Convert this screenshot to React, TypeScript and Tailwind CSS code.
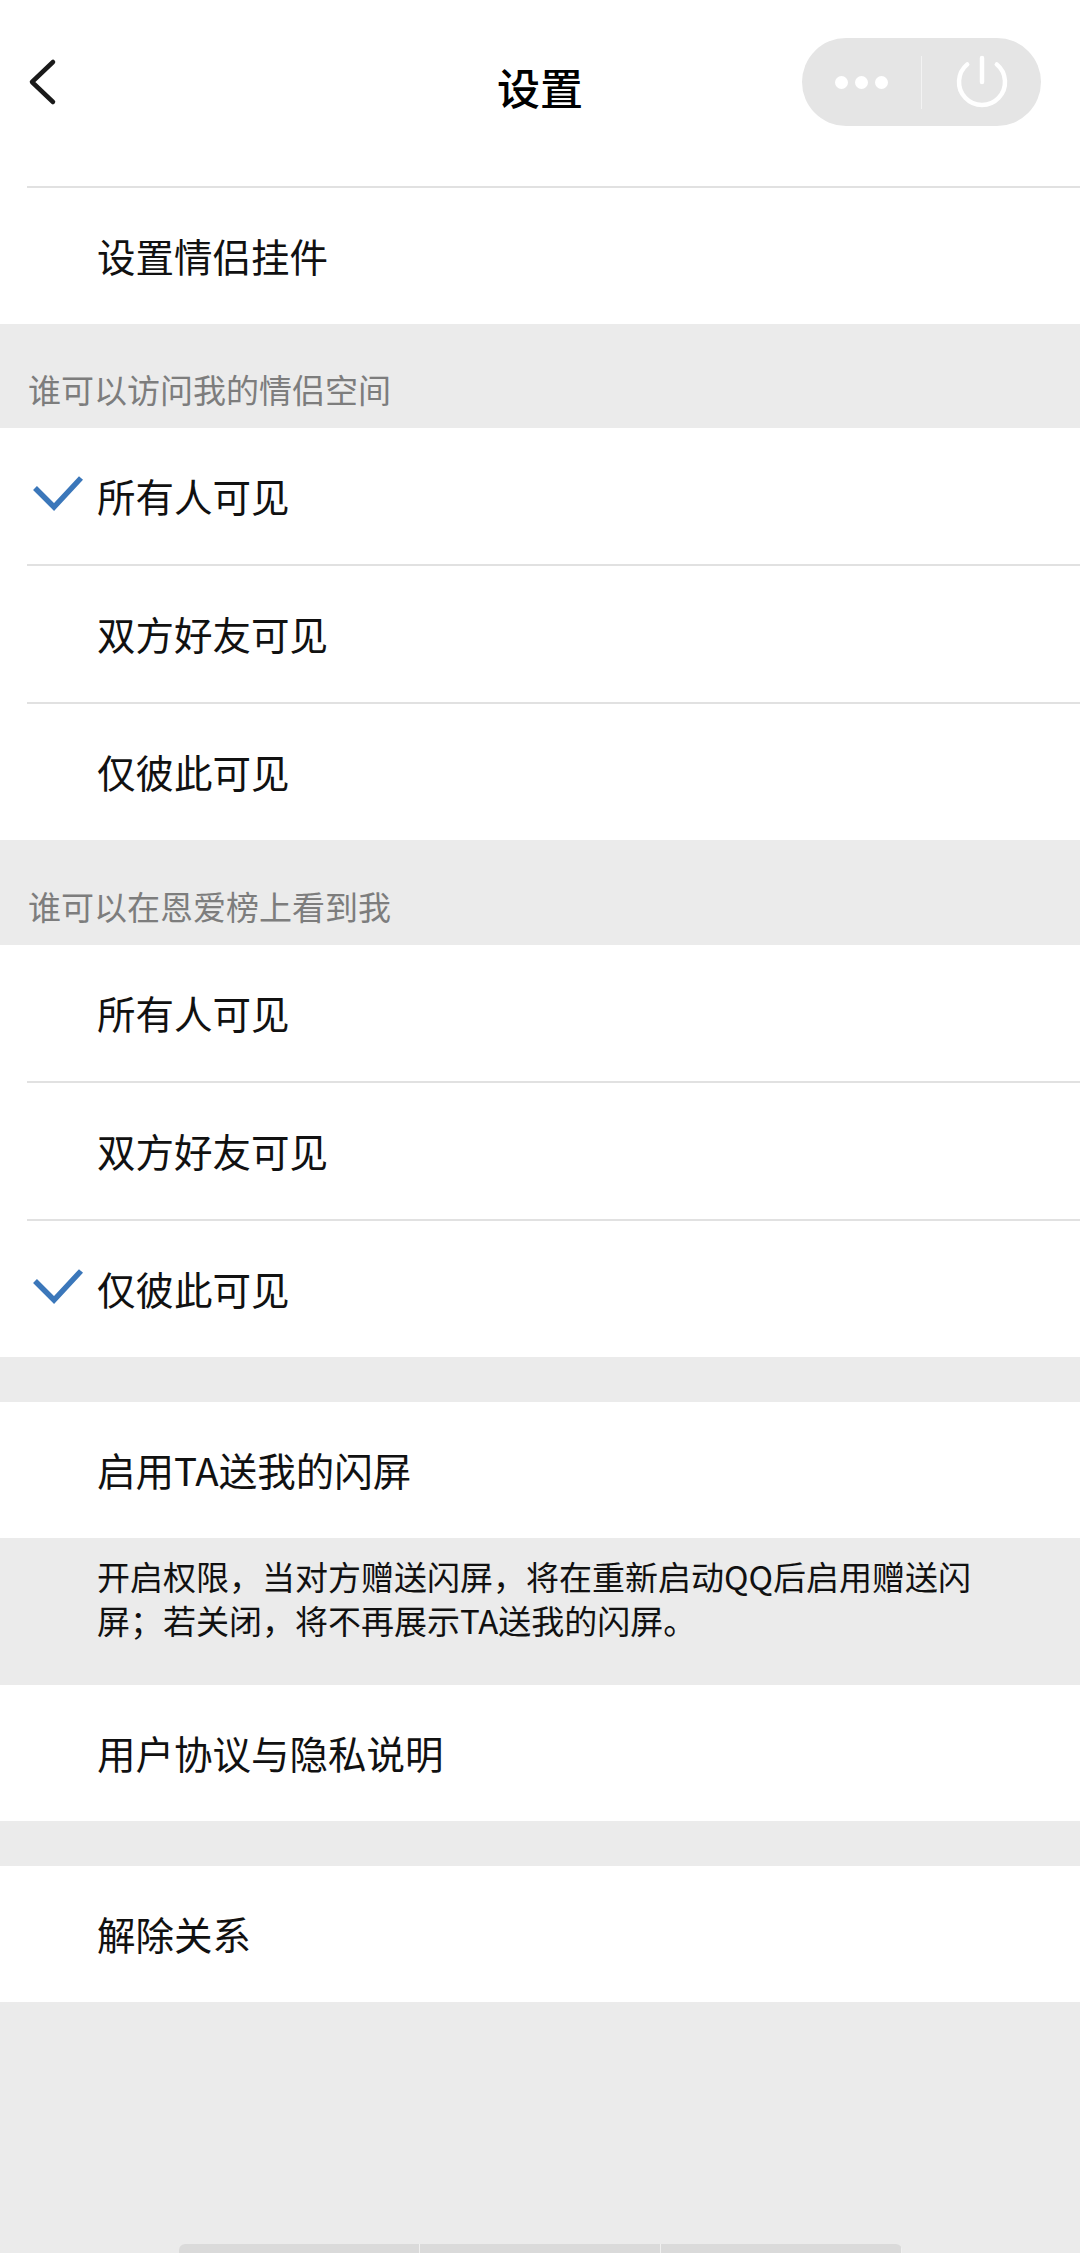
import React from "react";

function Check() {
  return (
    <svg width="52" height="40" viewBox="0 0 52 40" className="mb-[8px]">
      <polyline points="3,16 22,35 49,6" fill="none" stroke="#3b77ba" strokeWidth="5.5" strokeLinejoin="miter" />
    </svg>
  );
}

function Row({ label, checked }: { label: React.ReactNode; checked?: boolean }) {
  return (
    <div className="h-[136px] flex items-center bg-white">
      <div className="w-[97px] shrink-0 pl-[32px] flex items-center">{checked ? <Check /> : null}</div>
      <span className="text-[38.5px] leading-[48px] mb-[3px] text-[#111111]">{label}</span>
    </div>
  );
}

function Sep() {
  return (
    <div className="bg-white">
      <div className="ml-[27px] h-[2px] bg-[#e1e1e1]" />
    </div>
  );
}

function SectionHeader({ text, h }: { text: string; h: string }) {
  return (
    <div className={`${h} flex items-end pl-[28px] pb-[19px] bg-[#ebebeb]`}>
      <span className="text-[33px] leading-[40px] text-[#7d7d7d]">{text}</span>
    </div>
  );
}

export default function App() {
  return (
    <div className="w-full min-h-[2253px] flex flex-col bg-[#ebebeb] font-['Noto_Sans_CJK_SC','Noto_Sans',sans-serif]">
      {/* Header */}
      <div className="bg-white h-[186px] pt-[38px]">
        <div className="h-[88px] grid grid-cols-[1fr_auto_1fr] items-center">
          <div className="flex items-center pl-[28px]">
            <svg width="30" height="48" viewBox="0 0 30 48">
              <polyline points="25,4 4,24 25,44" fill="none" stroke="#1a1a1a" strokeWidth="4.5" strokeLinecap="round" strokeLinejoin="round" />
            </svg>
          </div>
          <div className="pt-[8px] text-[43px] leading-[52px] font-medium text-black">设置</div>
          <div className="flex justify-end pr-[39px]">
            <div className="w-[239px] h-[88px] rounded-full bg-[#e5e5e5] flex items-center">
              <div className="flex-1 flex items-center justify-center gap-[7px]">
                <span className="w-[13px] h-[13px] rounded-full bg-white" />
                <span className="w-[13px] h-[13px] rounded-full bg-white" />
                <span className="w-[13px] h-[13px] rounded-full bg-white" />
              </div>
              <div className="w-[1px] h-[53px] bg-[#f3f3f3]" />
              <div className="flex-1 flex items-center justify-center">
                <svg width="56" height="56" viewBox="0 0 56 56">
                  <path d="M13.2 10.4 A23 23 0 1 0 42.8 10.4" fill="none" stroke="white" strokeWidth="4.5" strokeLinecap="round" />
                  <line x1="28" y1="4" x2="28" y2="28" stroke="white" strokeWidth="4.5" strokeLinecap="round" />
                </svg>
              </div>
            </div>
          </div>
        </div>
      </div>
      <Sep />
      <Row label="设置情侣挂件" />

      <SectionHeader text="谁可以访问我的情侣空间" h="h-[104px]" />
      <Row label="所有人可见" checked />
      <Sep />
      <Row label="双方好友可见" />
      <Sep />
      <Row label="仅彼此可见" />

      <SectionHeader text="谁可以在恩爱榜上看到我" h="h-[105px]" />
      <Row label="所有人可见" />
      <Sep />
      <Row label="双方好友可见" />
      <Sep />
      <Row label="仅彼此可见" checked />

      <div className="h-[45px]" />
      <Row label="启用TA送我的闪屏" />
      <div className="h-[147px] pt-[16px] pl-[97px] pr-[60px]">
        <p className="text-[33px] leading-[44px] text-[#111111]">
          开启权限，当对方赠送闪屏，将在重新启动QQ后启用赠送闪
          <br />
          屏；若关闭，将不再展示TA送我的闪屏。
        </p>
      </div>
      <Row label="用户协议与隐私说明" />
      <div className="h-[45px]" />
      <Row label="解除关系" />

      <div className="flex-1" />
      <div className="flex justify-center">
        <div className="w-[723px] h-[9px] flex gap-[1px] rounded-t-[6px] overflow-hidden bg-[#f0f0f0]">
          <div className="flex-1 bg-[#dadada]" />
          <div className="flex-1 bg-[#dadada]" />
          <div className="flex-1 bg-[#dadada]" />
        </div>
      </div>
    </div>
  );
}
